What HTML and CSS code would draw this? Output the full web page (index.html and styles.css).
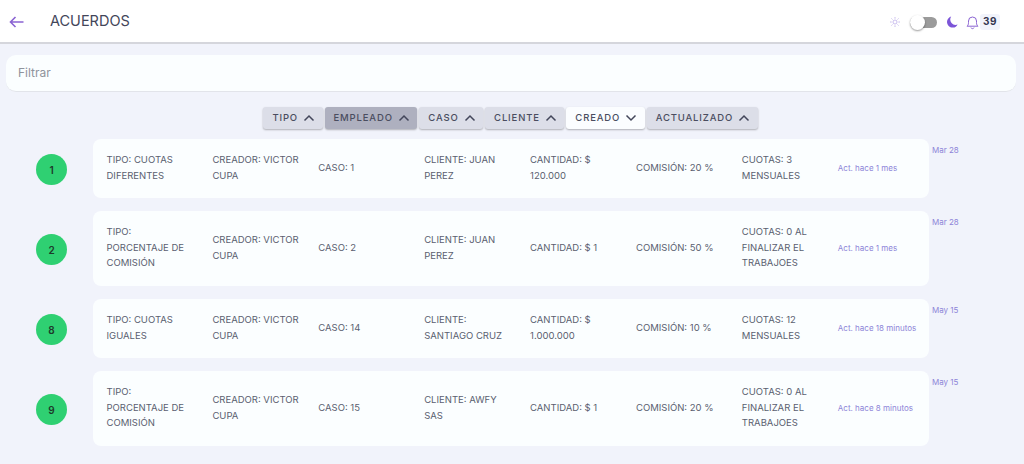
FILE: index.html
```html
<!DOCTYPE html>
<html lang="es">
<head>
<meta charset="utf-8">
<title>Acuerdos</title>
<link rel="stylesheet" href="styles.css">
</head>
<body>
<header class="topbar">
  <svg class="back" width="15" height="12" viewBox="0 0 15 12"><path d="M14.5 6H1.5M6.5 1 1.5 6l5 5" fill="none" stroke="#8a63d2" stroke-width="1.6"/></svg>
  <h1 class="title">ACUERDOS</h1>
  <div class="tools">
    <svg class="sun" width="10" height="10" viewBox="0 0 12 12"><g stroke="#b9a9e8" stroke-width=".9"><circle cx="6" cy="6" r="2.4" fill="none"/><path d="M6 0v2M6 10v2M0 6h2M10 6h2M1.7 1.7 3 3M9 9l1.3 1.3M1.7 10.3 3 9M9 3l1.3-1.3"/></g></svg>
    <div class="switch"><span class="knob"></span></div>
    <svg class="moon" width="11" height="12" viewBox="0 0 11 12"><path d="M4.2.6A5.6 5.6 0 1 0 10.6 8.6 5.4 5.4 0 0 1 4.2.6Z" fill="#7c55d8"/></svg>
    <svg class="bell" width="13" height="15" viewBox="0 0 13 15"><path d="M1 11.2c1-.9 1.5-1.8 1.5-3.6V6a4 4 0 0 1 8 0v1.6c0 1.8.5 2.7 1.5 3.6ZM5 12.6a1.6 1.6 0 0 0 3 0" fill="none" stroke="#8a63d2" stroke-width="1"/></svg>
    <span class="count">39</span>
  </div>
</header>
<main class="content">
  <div class="filter">Filtrar</div>
  <nav class="sorts">
    <button class="sort">TIPO <svg class="chev" viewBox="0 0 12 8"><path d="M1.5 6.5 6 2l4.5 4.5"/></svg></button>
    <button class="sort sort-active">EMPLEADO <svg class="chev" viewBox="0 0 12 8"><path d="M1.5 6.5 6 2l4.5 4.5"/></svg></button>
    <button class="sort">CASO <svg class="chev" viewBox="0 0 12 8"><path d="M1.5 6.5 6 2l4.5 4.5"/></svg></button>
    <button class="sort">CLIENTE <svg class="chev" viewBox="0 0 12 8"><path d="M1.5 6.5 6 2l4.5 4.5"/></svg></button>
    <button class="sort sort-light">CREADO <svg class="chev" viewBox="0 0 12 8"><path d="M1.5 1.5 6 6l4.5-4.5"/></svg></button>
    <button class="sort">ACTUALIZADO <svg class="chev" viewBox="0 0 12 8"><path d="M1.5 6.5 6 2l4.5 4.5"/></svg></button>
  </nav>
  <section class="list">
    <article class="row">
      <div class="badge">1</div>
      <div class="card">
        <div>TIPO: CUOTAS DIFERENTES</div><div>CREADOR: VICTOR CUPA</div><div>CASO: 1</div><div>CLIENTE: JUAN PEREZ</div><div>CANTIDAD: $ 120.000</div><div>COMISIÓN: 20 %</div><div>CUOTAS: 3 MENSUALES</div><div class="updated">Act. hace 1 mes</div>
      </div>
      <time class="date">Mar 28</time>
    </article>
    <article class="row">
      <div class="badge">2</div>
      <div class="card">
        <div>TIPO: PORCENTAJE DE COMISIÓN</div><div>CREADOR: VICTOR CUPA</div><div>CASO: 2</div><div>CLIENTE: JUAN PEREZ</div><div>CANTIDAD: $ 1</div><div>COMISIÓN: 50 %</div><div>CUOTAS: 0 AL FINALIZAR EL TRABAJOES</div><div class="updated">Act. hace 1 mes</div>
      </div>
      <time class="date">Mar 28</time>
    </article>
    <article class="row">
      <div class="badge">8</div>
      <div class="card">
        <div>TIPO: CUOTAS IGUALES</div><div>CREADOR: VICTOR CUPA</div><div>CASO: 14</div><div>CLIENTE: SANTIAGO CRUZ</div><div>CANTIDAD: $ 1.000.000</div><div>COMISIÓN: 10 %</div><div>CUOTAS: 12 MENSUALES</div><div class="updated">Act. hace 18 minutos</div>
      </div>
      <time class="date">May 15</time>
    </article>
    <article class="row">
      <div class="badge">9</div>
      <div class="card">
        <div>TIPO: PORCENTAJE DE COMISIÓN</div><div>CREADOR: VICTOR CUPA</div><div>CASO: 15</div><div>CLIENTE: AWFY SAS</div><div>CANTIDAD: $ 1</div><div>COMISIÓN: 20 %</div><div>CUOTAS: 0 AL FINALIZAR EL TRABAJOES</div><div class="updated">Act. hace 8 minutos</div>
      </div>
      <time class="date">May 15</time>
    </article>
  </section>
</main>
</body>
</html>
```
FILE: styles.css
```css
* { box-sizing: border-box; }
html, body { height: 100%; }
body {
  margin: 0;
  overflow: hidden;
  background: #f1f3fb;
  font-family: Inter, "Liberation Sans", sans-serif;
  color: #5a5f70;
}
.topbar {
  height: 44px;
  background: #fff;
  border-bottom: 2px solid #d5d6dc;
  display: flex;
  align-items: center;
  padding: 0 24px 0 9px;
}
.back { flex: none; margin-top: 2px; }
.title {
  margin: -2px 0 0 26px;
  font-size: 14.5px;
  font-weight: 400;
  color: #43465a;
}
.tools { margin-left: auto; display: flex; align-items: center; margin-top: 2px; }
.sun { margin-right: 10px; }
.switch {
  width: 27px;
  height: 11px;
  border-radius: 6px;
  background: #9b9b9b;
  position: relative;
  margin-right: 10px;
}
.knob {
  position: absolute;
  left: 0;
  top: -2px;
  width: 15px;
  height: 15px;
  border-radius: 50%;
  background: #fff;
  box-shadow: 0 1px 2px rgba(0,0,0,.4);
}
.moon { margin-right: 8px; }
.bell { margin-right: 1px; }
.count {
  background: #f1f3fb;
  border-radius: 3px;
  padding: 1px 3px 3px;
  font-size: 10px;
  font-weight: 700;
  letter-spacing: .5px;
  color: #343650;
}
.content { padding: 11px 8px 0 6px; }
.filter {
  height: 37px;
  background: #fbfeff;
  border-radius: 10px;
  border-bottom: 1px solid #e2e4ea;
  padding: 0 12px;
  line-height: 36px;
  font-size: 12px;
  color: #8f939c;
  width: 1010px;
}
.sorts {
  display: flex;
  justify-content: center;
  gap: 2px;
  margin: 15px 0 0 0;
  height: 22px;
  padding-right: 1px;
}
.sort {
  height: 22px;
  padding: 0 7.5px 1px 9px;
  border: 0;
  border-radius: 3px;
  background: #dcdee8;
  font: 500 9.5px Inter, "Liberation Sans", sans-serif;
  letter-spacing: .85px;
  color: #4a4d60;
  box-shadow: 0 1px 2px rgba(0,0,0,.28);
  display: flex;
  align-items: center;
  gap: 5px;
  white-space: nowrap;
}
.sort-active { background: #aeb0bf; }
.sort-light { background: #fbfdff; }
.chev { width: 12px; height: 8px; fill: none; stroke: #43465a; stroke-width: 1.5; }
.list { margin-top: 10px; display: flex; flex-direction: column; gap: 13px; }
.row { display: flex; align-items: stretch; padding-left: 30px; }
.badge {
  flex: none;
  align-self: center;
  width: 31px;
  height: 31px;
  margin-top: 2px;
  border-radius: 50%;
  background: #2fd072;
  color: #1d3a2a;
  font-size: 10px;
  font-weight: 600;
  display: flex;
  align-items: center;
  justify-content: center;
  margin-right: 26px;
}
.card {
  width: 836px;
  background: #fbfeff;
  border-radius: 8px;
  padding: 13px 0 15px 13.5px;
  display: grid;
  grid-template-columns: repeat(6, 105.9px) 96px 1fr;
  align-items: center;
  font-size: 9.5px;
  line-height: 15.6px;
}
.card > div { padding-right: 18px; }
.card > .updated { padding: 2px 0 0; font-size: 8px; color: #8d84d8; white-space: nowrap; }
.date { margin: 6px 0 0 3px; font-size: 8px; line-height: 10px; color: #8d84d8; }
```
